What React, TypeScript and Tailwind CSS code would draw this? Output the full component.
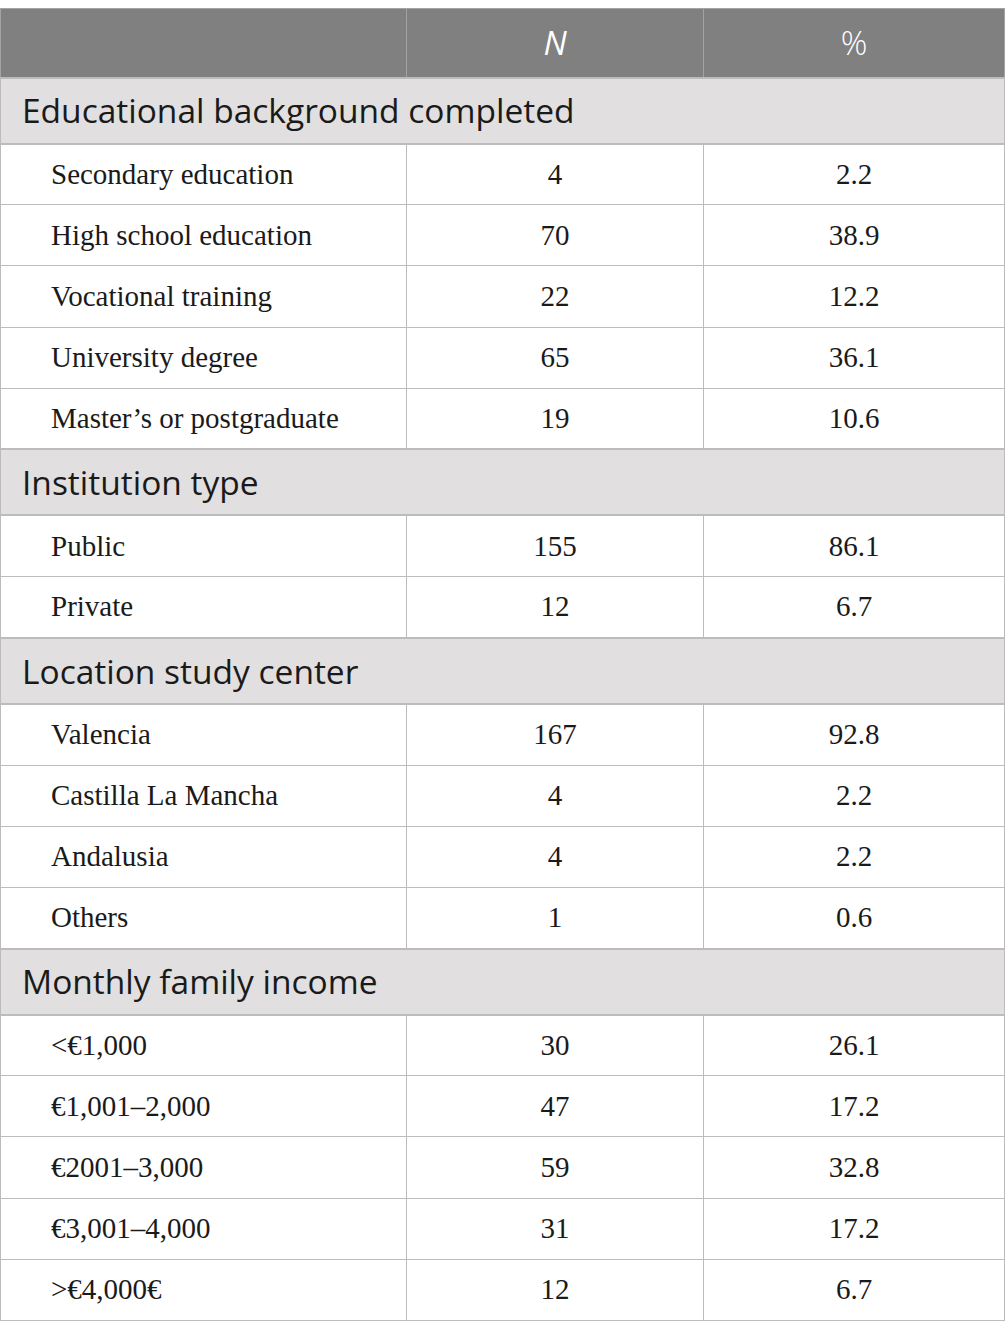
type Row = { label: string; n: string; pct: string };
type Section = { title: string; rows: Row[] };

const sections: Section[] = [
  {
    title: 'Educational background completed',
    rows: [
      { label: 'Secondary education', n: '4', pct: '2.2' },
      { label: 'High school education', n: '70', pct: '38.9' },
      { label: 'Vocational training', n: '22', pct: '12.2' },
      { label: 'University degree', n: '65', pct: '36.1' },
      { label: 'Master\u2019s or postgraduate', n: '19', pct: '10.6' },
    ],
  },
  {
    title: 'Institution type',
    rows: [
      { label: 'Public', n: '155', pct: '86.1' },
      { label: 'Private', n: '12', pct: '6.7' },
    ],
  },
  {
    title: 'Location study center',
    rows: [
      { label: 'Valencia', n: '167', pct: '92.8' },
      { label: 'Castilla La Mancha', n: '4', pct: '2.2' },
      { label: 'Andalusia', n: '4', pct: '2.2' },
      { label: 'Others', n: '1', pct: '0.6' },
    ],
  },
  {
    title: 'Monthly family income',
    rows: [
      { label: '<\u20ac1,000', n: '30', pct: '26.1' },
      { label: '\u20ac1,001\u20132,000', n: '47', pct: '17.2' },
      { label: '\u20ac2001\u20133,000', n: '59', pct: '32.8' },
      { label: '\u20ac3,001\u20134,000', n: '31', pct: '17.2' },
      { label: '>\u20ac4,000\u20ac', n: '12', pct: '6.7' },
    ],
  },
];

export default function App() {
  return (
    <div className="bg-white pt-2 w-[1005px] min-h-[1338px]">
      <table className="w-[1004px] border-collapse table-fixed border border-[#bcbcbc]">
        <colgroup>
          <col className="w-[406px]" />
          <col className="w-[297px]" />
          <col className="w-[301px]" />
        </colgroup>
        <thead>
          {/* Header */}
          <tr className="h-[69px] bg-[#7f807f] text-white font-['Open_Sans',sans-serif] text-[33px]">
            <th className="border border-[#a3a3a3]"></th>
            <th className="border border-[#a3a3a3] font-normal italic">N</th>
            <th className="border border-[#a3a3a3] font-light">%</th>
          </tr>
        </thead>
        <tbody>
          {sections.map((section) => (
            <>
              <tr key={section.title} className="h-[66px] bg-[#e1dfe0]">
                <td
                  colSpan={3}
                  className="border-y-2 border-[#bcbcbc] pl-[21px] text-[33.5px] text-[#1a1a1a] font-['Open_Sans',sans-serif]"
                >
                  {section.title}
                </td>
              </tr>
              {section.rows.map((row) => (
                <tr
                  key={section.title + row.label}
                  className="h-[61.2px] text-[29px] text-[#1a1a1a] font-['Liberation_Serif',serif]"
                >
                  <td className="border border-[#bcbcbc] pl-[50px]">{row.label}</td>
                  <td className="border border-[#bcbcbc] text-center">{row.n}</td>
                  <td className="border border-[#bcbcbc] text-center">{row.pct}</td>
                </tr>
              ))}
            </>
          ))}
        </tbody>
      </table>
    </div>
  );
}
